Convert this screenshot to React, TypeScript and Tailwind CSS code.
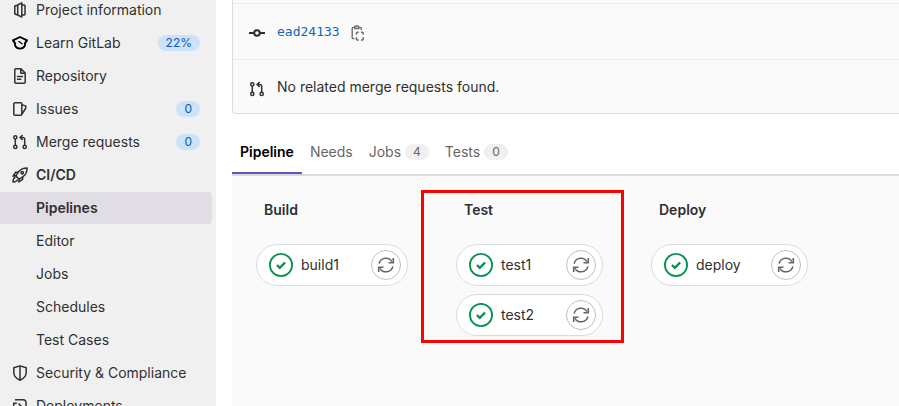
import type { ReactNode } from "react";

type IconProps = { children: ReactNode; className?: string };

function Icon({ children, className = "" }: IconProps) {
  return (
    <svg
      viewBox="0 0 16 16"
      className={`size-4 shrink-0 ${className}`}
      fill="none"
      stroke="currentColor"
      strokeWidth="1.5"
      aria-hidden="true"
    >
      {children}
    </svg>
  );
}

const ProjectIcon = () => (
  <Icon>
    <path d="M5.7 3 9.8 .9v14.2L5.7 13M5.7 3v10M5.7 3 2.8 4v8l2.9 1M9.8 3h2.5a.7.7 0 0 1 .7.7v8.6a.7.7 0 0 1-.7.7H9.8" strokeLinejoin="round" />
  </Icon>
);

const LearnIcon = () => (
  <Icon className="text-black">
    <path d="M8 2 15 5.4 12.9 8.4V10.6Q11.5 13.6 8 13.6T3.1 10.6V8.4L1 5.4Z" strokeWidth="1.9" strokeLinejoin="round" />
    <path d="m7 6.5 3 2.3" strokeWidth="1.3" strokeLinecap="round" />
  </Icon>
);

const DocumentIcon = () => (
  <Icon>
    <path d="M9 .8H3.8a1 1 0 0 0-1 1v12.4a1 1 0 0 0 1 1h8.4a1 1 0 0 0 1-1V5L9 .8ZM8.8 1v4.2H13M5.5 8.5h5M5.5 11.3h3.3" strokeLinejoin="round" strokeLinecap="round" />
  </Icon>
);

const IssuesIcon = () => (
  <Icon>
    <rect x="1.8" y="1.8" width="8" height="12.4" rx="1" />
    <path d="m10 3.6 3.9 1.5-.3 2.4L10 13" strokeLinejoin="round" />
  </Icon>
);

const MergeIcon = ({ className }: { className?: string }) => (
  <Icon className={className}>
    <circle cx="3.3" cy="3.3" r="1.6" />
    <circle cx="3.3" cy="12.9" r="1.6" />
    <circle cx="12.7" cy="12.9" r="1.6" />
    <path d="M3.3 5v6.2M12.7 11.2V5.5a2 2 0 0 0-2-2H8.5M10.6 1 8.1 3.5 10.6 6" />
  </Icon>
);

const RocketIcon = () => (
  <Icon>
    <path d="M15.1.9c-4 .1-6.3 1-8.1 3.4L4.6 7.6c-.6.9-.5 1.6.2 2.3l1.3 1.3c.7.7 1.4.8 2.3.2L11.7 9c2.4-1.8 3.3-4.1 3.4-8.1Z" strokeLinejoin="round" />
    <circle cx="10.2" cy="5.8" r="1.2" />
    <path d="M6.3 5.3H3.7L1 9.2l3.3-.6M10.7 9.7v2.6L6.8 15l.6-3.3M3.6 10.3C1.5 10.7 1.1 12.3 1 15c2.7-.1 4.3-.5 4.7-2.6" strokeLinejoin="round" />
  </Icon>
);

const ShieldIcon = () => (
  <Icon>
    <path d="M8 .9 1.8 2.8v4.4c0 3.6 2.3 6.3 6.2 8 3.9-1.7 6.2-4.4 6.2-8V2.8L8 .9ZM8 1v14" strokeLinejoin="round" />
  </Icon>
);

const DeployIcon = () => (
  <Icon>
    <path d="M3 1.8h8.5a2.5 2.5 0 0 1 2.5 2.5v7.4a2.5 2.5 0 0 1-2.5 2.5H9M1.8 8V5.2h3M6.5 5.5 9 8l-2.5 2.5M1.8 10v4.2H5" />
  </Icon>
);

const CommitIcon = ({ className }: { className?: string }) => (
  <Icon className={className}>
    <circle cx="8" cy="8" r="2.8" strokeWidth="2" />
    <path d="M0 8h5M11 8h5" strokeWidth="2" />
  </Icon>
);

const CopyIcon = () => (
  <Icon>
    <path d="M4.5 13.7H3.2a1 1 0 0 1-1-1V3.3a1 1 0 0 1 1-1h1.5M8.8 2.3h1.5a1 1 0 0 1 1 1V5M4.7 3.5V2.2A1.2 1.2 0 0 1 5.9 1h1.7a1.2 1.2 0 0 1 1.2 1.2v1.3Z" strokeWidth="1.3" />
    <path d="M6.4 9.4V8.2a1 1 0 0 1 1-1h1.2M11 7.2h1.2a1 1 0 0 1 1 1v1.2M13.2 12.2v1.9a1 1 0 0 1-1 1H11M8.6 15.1H7.4a1 1 0 0 1-1-1v-1.9" strokeWidth="1.5" />
  </Icon>
);

const RetryIcon = () => (
  <svg viewBox="0 0 18 18" className="size-[18px]" fill="none" stroke="currentColor" strokeWidth="1.5" aria-hidden="true">
    <path d="M2.1 7.7a7 7 0 0 1 12.9-2M15.9 10.3a7 7 0 0 1-12.9 2" />
    <path d="M16.3 2v4.7h-4.8M1.7 16v-4.7h4.8" strokeWidth="1.6" />
  </svg>
);

const PassedIcon = () => (
  <svg viewBox="0 0 24 24" className="size-6 shrink-0 text-[#08904e]" fill="none" stroke="currentColor" role="img" aria-label="passed">
    <circle cx="12" cy="12" r="11.1" strokeWidth="1.8" />
    <path d="m7.9 12 2.9 2.8 5.3-5.3" strokeWidth="2.4" />
  </svg>
);

type NavItem = {
  label: string;
  icon?: ReactNode;
  badge?: string;
  state?: "open" | "current";
};

const navItems: NavItem[] = [
  { label: "Project information", icon: <ProjectIcon /> },
  { label: "Learn GitLab", icon: <LearnIcon />, badge: "22%" },
  { label: "Repository", icon: <DocumentIcon /> },
  { label: "Issues", icon: <IssuesIcon />, badge: "0" },
  { label: "Merge requests", icon: <MergeIcon />, badge: "0" },
  { label: "CI/CD", icon: <RocketIcon />, state: "open" },
  { label: "Pipelines", state: "current" },
  { label: "Editor" },
  { label: "Jobs" },
  { label: "Schedules" },
  { label: "Test Cases" },
  { label: "Security & Compliance", icon: <ShieldIcon /> },
  { label: "Deployments", icon: <DeployIcon /> },
];

function Sidebar() {
  return (
    <nav aria-label="Project" className="w-[216px] shrink-0 overflow-hidden bg-[#f0f0f0] pr-1">
      <ul className="-mt-1.5 flex flex-col gap-px">
        {navItems.map((item) => (
          <li key={item.label}>
            <a
              href="#"
              aria-current={item.state === "current" ? "page" : undefined}
              className={`flex h-8 items-center gap-2 rounded-r px-3 ${
                item.state === "current" ? "bg-[#e1dde4]" : ""
              } ${item.state ? "font-semibold" : ""}`}
            >
              <span className="flex size-4 shrink-0">{item.icon}</span>
              <span className="grow whitespace-nowrap">{item.label}</span>
              {item.badge && (
                <span className="rounded-full bg-[#cbe2f9] px-2 text-xs leading-4 font-normal text-[#0b5cad]">
                  {item.badge}
                </span>
              )}
            </a>
          </li>
        ))}
      </ul>
    </nav>
  );
}

const tabs = [
  { label: "Pipeline", selected: true },
  { label: "Needs" },
  { label: "Jobs", count: 4 },
  { label: "Tests", count: 0 },
];

function Tabs() {
  return (
    <div role="tablist" className="mt-4 flex h-[46px] border-b-2 border-[#dbdbdb]">
      {tabs.map((tab) => (
        <button
          key={tab.label}
          type="button"
          role="tab"
          aria-selected={!!tab.selected}
          className={`flex items-center gap-1 border-b-2 px-2 pt-0.5 ${
            tab.selected ? "border-[#6b4fbb] font-semibold text-black" : "border-transparent text-[#666]"
          }`}
        >
          {tab.label}
          {tab.count !== undefined && (
            <span className="rounded-full bg-[#f0f0f0] px-2 text-xs leading-4">{tab.count}</span>
          )}
        </button>
      ))}
    </div>
  );
}

function Job({ name }: { name: string }) {
  return (
    <li className="flex h-[42px] items-center rounded-full border border-[#dbdbdb] bg-white pr-1.5 pl-3">
      <PassedIcon />
      <span className="grow pl-2">{name}</span>
      <button
        type="button"
        aria-label={`Retry ${name}`}
        className="flex size-[30px] items-center justify-center rounded-full border border-[#bfbfbf] text-[#666]"
      >
        <RetryIcon />
      </button>
    </li>
  );
}

type StageProps = { title: string; jobs: string[]; width: string; highlighted?: boolean };

function Stage({ title, jobs, width, highlighted }: StageProps) {
  return (
    <section className={`relative shrink-0 ${width}`}>
      <h2 className="pl-2 leading-5 font-semibold">{title}</h2>
      <ul className="mt-6 flex flex-col gap-2">
        {jobs.map((job) => (
          <Job key={job} name={job} />
        ))}
      </ul>
      {highlighted && (
        <div className="pointer-events-none absolute -top-2.5 -right-[21px] -bottom-[7px] -left-[35px] border-3 border-[#f00]" />
      )}
    </section>
  );
}

export default function App() {
  return (
    <div className="flex h-screen overflow-hidden bg-white font-['Inter',sans-serif] text-sm leading-5 text-[#303030]">
      <Sidebar />
      <main className="flex min-w-0 grow flex-col pl-4">
        <div className="rounded-bl border-b border-l border-[#dbdbdb] bg-[#fafafa]">
          <div className="h-[3px]" />
          <div className="flex h-14 items-center border-t border-[#ececec] px-4">
            <CommitIcon className="mt-0.5" />
            <a href="#" className="ml-3 font-['DejaVu_Sans_Mono',monospace] text-[13px] text-[#1068bf]">
              ead24133
            </a>
            <button type="button" aria-label="Copy commit SHA" className="mt-0.5 ml-2.5 text-[#666]">
              <CopyIcon />
            </button>
          </div>
          <div className="flex h-[54px] items-center gap-3 border-t border-[#ececec] px-4">
            <MergeIcon className="mt-1" />
            <span>No related merge requests found.</span>
          </div>
        </div>
        <Tabs />
        <div className="flex grow items-start gap-12 bg-[#fafafa] px-6 pt-6">
          <Stage title="Build" jobs={["build1"]} width="w-[152px]" />
          <Stage title="Test" jobs={["test1", "test2"]} width="w-[147px]" highlighted />
          <Stage title="Deploy" jobs={["deploy"]} width="w-[157px]" />
        </div>
      </main>
    </div>
  );
}
